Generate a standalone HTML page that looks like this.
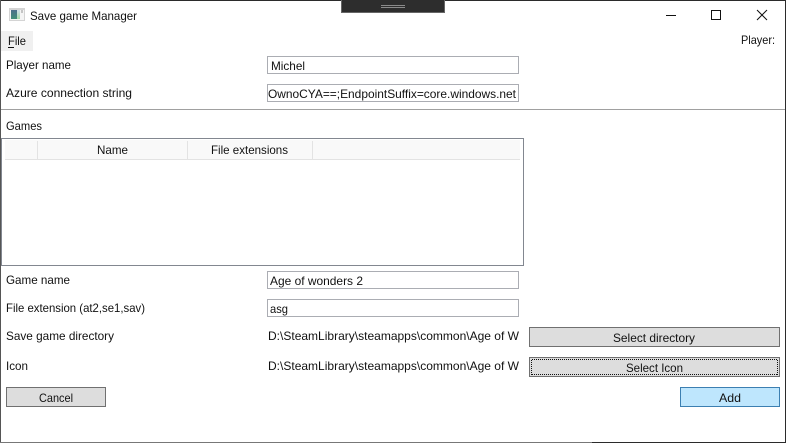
<!DOCTYPE html>
<html>
<head>
<meta charset="utf-8">
<style>
html,body{margin:0;padding:0;background:#fff;width:786px;height:443px;overflow:hidden}
svg{display:block;position:absolute;left:0;top:0}
text{font-family:"Liberation Sans",sans-serif;font-size:12px;fill:#111}
</style>
</head>
<body>
<svg width="786" height="443" viewBox="0 0 786 443" shape-rendering="crispEdges">
<defs>
<pattern id="dh" width="2" height="1" patternUnits="userSpaceOnUse"><rect width="1" height="1" fill="#111"/></pattern>
<pattern id="dv" width="1" height="2" patternUnits="userSpaceOnUse"><rect width="1" height="1" fill="#111"/></pattern>
<linearGradient id="ic" x1="0" y1="0" x2="0" y2="1"><stop offset="0" stop-color="#4d6f8c"/><stop offset="1" stop-color="#3f8f78"/></linearGradient>
<linearGradient id="ic2" x1="0" y1="0" x2="0" y2="1"><stop offset="0" stop-color="#cfe0ea"/><stop offset="1" stop-color="#a6d8a8"/></linearGradient>
</defs>
<rect width="786" height="443" fill="#fff"/>
<!-- window border -->
<rect x="0" y="0" width="786" height="1" fill="#2b2b2b"/>
<rect x="0" y="0" width="1" height="443" fill="#555"/>
<rect x="785" y="0" width="1" height="443" fill="#2b2b2b"/>
<rect x="0" y="442" width="592" height="1" fill="#777"/>
<rect x="592" y="442" width="194" height="1" fill="#2b2b2b"/>
<!-- top drag handle -->
<rect x="341" y="0" width="104" height="13" fill="#666"/>
<rect x="342" y="0" width="102" height="12" fill="#2d2d2d"/>
<rect x="381" y="5" width="24" height="1" fill="#8a8a8a"/>
<rect x="381" y="7" width="24" height="1" fill="#8a8a8a"/>
<!-- app icon -->
<rect x="9" y="8" width="16" height="13" fill="#d4d4d4"/>
<rect x="10" y="10" width="14" height="10" fill="#f4f4f4"/>
<rect x="11" y="10" width="6" height="9" fill="url(#ic)"/>
<rect x="17" y="10" width="3" height="9" fill="url(#ic2)"/>
<rect x="21" y="10" width="2" height="3" fill="#c4c4c4"/>
<text x="30" y="20" textLength="107" lengthAdjust="spacingAndGlyphs">Save game Manager</text>
<!-- window controls -->
<rect x="666" y="15" width="10" height="1" fill="#111"/>
<rect x="711.5" y="10.5" width="9" height="9" fill="none" stroke="#111"/>
<path d="M757 10L767 20M767 10L757 20" stroke="#111" fill="none" shape-rendering="auto"/>
<!-- menu -->
<rect x="1" y="31" width="32" height="20" fill="#f0f0f0"/>
<text x="8" y="45" textLength="18" lengthAdjust="spacingAndGlyphs">File</text>
<rect x="8" y="47" width="6" height="1" fill="#111"/>
<text x="741" y="44" textLength="34" lengthAdjust="spacingAndGlyphs">Player:</text>
<!-- top form -->
<text x="6" y="69" textLength="65" lengthAdjust="spacingAndGlyphs">Player name</text>
<rect x="267.5" y="56.5" width="251" height="17" fill="#fff" stroke="#abadb3"/>
<text x="271" y="70" textLength="34" lengthAdjust="spacingAndGlyphs">Michel</text>
<text x="6" y="97" textLength="126" lengthAdjust="spacingAndGlyphs">Azure connection string</text>
<rect x="267.5" y="84.5" width="251" height="17" fill="#fff" stroke="#abadb3"/>
<text x="268" y="98" textLength="248" lengthAdjust="spacingAndGlyphs">OwnoCYA==;EndpointSuffix=core.windows.net</text>
<rect x="1" y="109" width="784" height="1" fill="#a0a0a0"/>
<text x="6" y="130" textLength="36" lengthAdjust="spacingAndGlyphs">Games</text>
<!-- data grid -->
<rect x="1.5" y="138.5" width="522" height="127" fill="#fff" stroke="#828790"/>
<rect x="5" y="140" width="515" height="19" fill="#f9f9f9"/>
<rect x="5" y="159" width="515" height="1" fill="#e3e3e3"/>
<rect x="37" y="141" width="1" height="18" fill="#e3e3e3"/>
<rect x="187" y="141" width="1" height="18" fill="#e3e3e3"/>
<rect x="312" y="141" width="1" height="18" fill="#e3e3e3"/>
<text x="97" y="154" textLength="31" lengthAdjust="spacingAndGlyphs">Name</text>
<text x="211" y="154" textLength="77" lengthAdjust="spacingAndGlyphs">File extensions</text>
<!-- lower form -->
<text x="6" y="284" textLength="64" lengthAdjust="spacingAndGlyphs">Game name</text>
<rect x="267.5" y="271.5" width="251" height="17" fill="#fff" stroke="#abadb3"/>
<text x="270" y="285" textLength="93" lengthAdjust="spacingAndGlyphs">Age of wonders 2</text>
<text x="6" y="312" textLength="139" lengthAdjust="spacingAndGlyphs">File extension (at2,se1,sav)</text>
<rect x="267.5" y="299.5" width="251" height="17" fill="#fff" stroke="#abadb3"/>
<text x="270" y="313" textLength="18" lengthAdjust="spacingAndGlyphs">asg</text>
<text x="6" y="340" textLength="108" lengthAdjust="spacingAndGlyphs">Save game directory</text>
<text x="268" y="340" textLength="251" lengthAdjust="spacingAndGlyphs">D:\SteamLibrary\steamapps\common\Age of W</text>
<text x="6" y="370" textLength="22" lengthAdjust="spacingAndGlyphs">Icon</text>
<text x="268" y="370" textLength="251" lengthAdjust="spacingAndGlyphs">D:\SteamLibrary\steamapps\common\Age of W</text>
<!-- buttons -->
<rect x="529.5" y="327.5" width="250" height="19" fill="#dddddd" stroke="#707070"/>
<text x="613" y="342" textLength="82" lengthAdjust="spacingAndGlyphs">Select directory</text>
<rect x="529.5" y="357.5" width="250" height="19" fill="#dddddd" stroke="#707070"/>
<rect x="531" y="359" width="247" height="1" fill="url(#dh)"/>
<rect x="531" y="374" width="247" height="1" fill="url(#dh)"/>
<rect x="531" y="359" width="1" height="16" fill="url(#dv)"/>
<rect x="777" y="359" width="1" height="16" fill="url(#dv)"/>
<text x="626" y="372" textLength="57" lengthAdjust="spacingAndGlyphs">Select Icon</text>
<rect x="6.5" y="387.5" width="99" height="19" fill="#dddddd" stroke="#707070"/>
<text x="39" y="402" textLength="34" lengthAdjust="spacingAndGlyphs">Cancel</text>
<rect x="680.5" y="387.5" width="99" height="19" fill="#bee6fd" stroke="#3c7fb1"/>
<text x="719" y="402" textLength="22" lengthAdjust="spacingAndGlyphs">Add</text>
</svg>
</body>
</html>
